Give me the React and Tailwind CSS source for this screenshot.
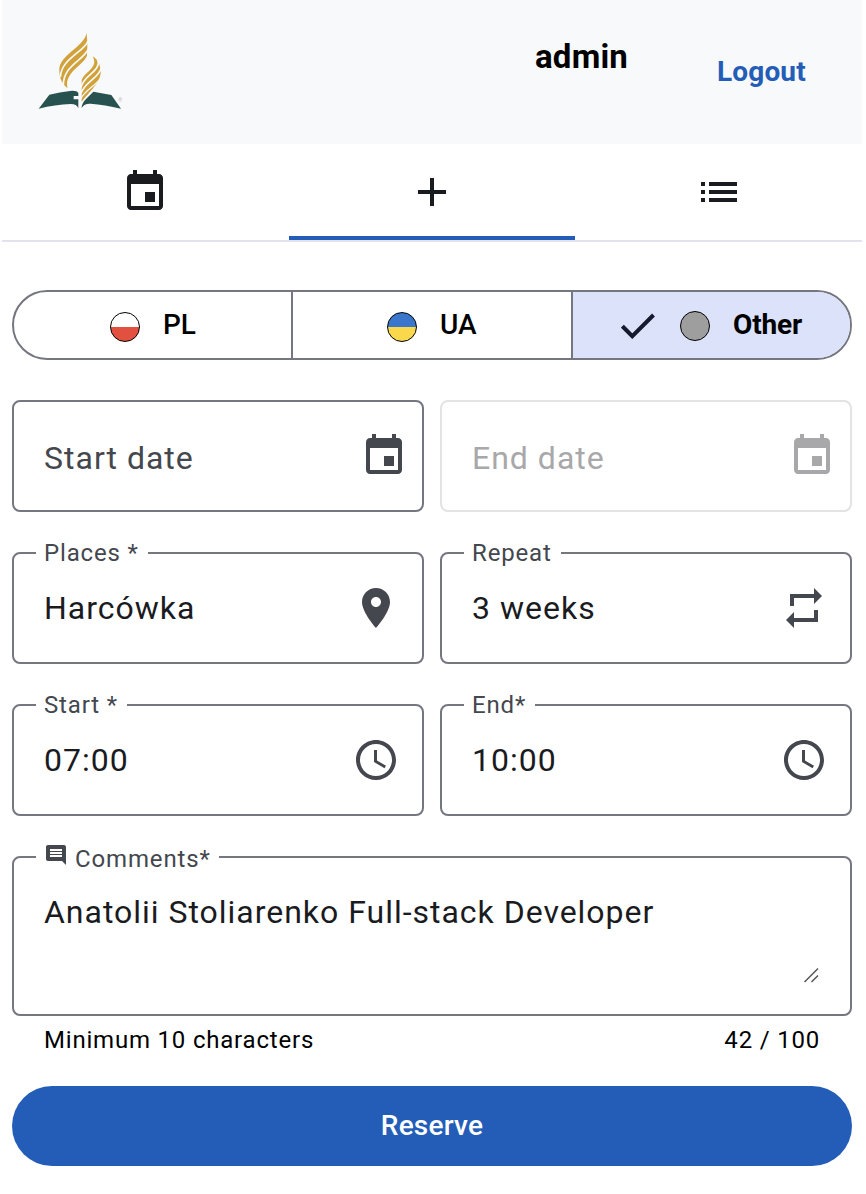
import React from "react";

const paths = {
  event:
    "M17 12h-5v5h5v-5zM16 1v2H8V1H6v2H5c-1.11 0-1.99.9-1.99 2L3 19c0 1.1.89 2 2 2h14c1.1 0 2-.9 2-2V5c0-1.1-.9-2-2-2h-1V1h-2zm3 18H5V8h14v11z",
  add: "M19 13h-6v6h-2v-6H5v-2h6V5h2v6h6v2z",
  list: "M3 13h2v-2H3v2zm0 4h2v-2H3v2zm0-8h2V7H3v2zm4 4h14v-2H7v2zm0 4h14v-2H7v2zM7 7v2h14V7H7z",
  place:
    "M12 2C8.13 2 5 5.13 5 9c0 5.25 7 13 7 13s7-7.75 7-13c0-3.87-3.13-7-7-7zm0 9.5c-1.38 0-2.5-1.12-2.5-2.5s1.12-2.5 2.5-2.5 2.5 1.12 2.5 2.5-1.12 2.5-2.5 2.5z",
  repeat: "M7 7h10v3l4-4-4-4v3H5v6h2V7zm10 10H7v-3l-4 4 4 4v-3h12v-6h-2v4z",
  clock:
    "M11.99 2C6.47 2 2 6.48 2 12s4.47 10 9.99 10C17.52 22 22 17.52 22 12S17.52 2 11.99 2zM12 20c-4.42 0-8-3.58-8-8s3.58-8 8-8 8 3.58 8 8-3.58 8-8 8zm.5-13H11v6l5.25 3.15.75-1.23-4.5-2.67z",
  comment:
    "M21.99 4c0-1.1-.89-2-1.99-2H4c-1.1 0-2 .9-2 2v12c0 1.1.9 2 2 2h14l4 4-.01-18zM18 14H6v-2h12v2zm0-3H6V9h12v2zm0-3H6V6h12v2z",
};

function Icon({ name, className = "size-12" }) {
  return (
    <svg viewBox="0 0 24 24" fill="currentColor" className={`shrink-0 ${className}`}>
      <path d={paths[name]} />
    </svg>
  );
}

function Logo() {
  return (
    <svg viewBox="108 90 270 240" className="mt-px h-20 w-[90px]">
      <g fill="#d2a23a">
        <path d="M260 96Q264 130 261 164C250 192 190 216 203 262C182 244 178 226 178 206C178 162 252 138 260 96Z" />
        <path d="M278 166C296 178 303 196 302 218C298 248 264 276 245 302V240C249 214 298 202 278 166Z" />
      </g>
      <g fill="none" stroke="#f8f9fb" strokeWidth="5">
        <path d="M264 120C254 152 184 172 181 228" />
        <path d="M264 146C250 178 190 194 190 252" />
        <path d="M294 176C304 212 248 222 242 262" />
        <path d="M304 200C298 232 250 244 242 281" />
        <path d="M304 228C290 254 256 264 242 294" strokeWidth="4" />
      </g>
      <g fill="#28524f">
        <path d="M148 281Q180 273 210 270Q230 268 235 276V285H221V295H235V322Q231 309 212 309Q166 311 116 323Z" />
        <path d="M280 272L334 282L363 323Q314 311 272 308Q252 307 245 321Q245 307 258 294Z" />
      </g>
      <text x="355" y="302" fontSize="15" fill="#b9bcbc" fontFamily="Roboto, sans-serif">®</text>
    </svg>
  );
}

function Field({ label, value, icon, disabled }) {
  return (
    <div
      className={`relative flex h-28 items-center justify-between rounded-lg border-2 pl-[30px] ${
        disabled
          ? "border-[#e3e3e3] pr-[14px] text-[#a8a8aa]"
          : value
            ? "border-[#74777f] pr-[22px] text-[#44474e]"
            : "border-[#74777f] pr-[14px] text-[#44474e]"
      }`}
    >
      {value ? (
        <>
          <span className="absolute -top-[15px] left-[22px] bg-white pl-2 pr-[9px] text-2xl leading-7 tracking-[0.85px]">{label}</span>
          <span className="text-[32px] leading-12 tracking-[1px] text-[#1a1b1f]">{value}</span>
          <Icon name={icon} />
        </>
      ) : (
        <>
          <span className="pt-1 text-[32px] leading-12 tracking-[1px]">{label}</span>
          <Icon name={icon} />
        </>
      )}
    </div>
  );
}

export default function App() {
  return (
    <div className="h-[1194px] w-[866px] overflow-hidden bg-white pl-0.5 pr-1 font-['Roboto',sans-serif] text-black">
      <header className="flex h-36 items-start bg-[#f8f9fb] pl-[34px] pt-[30px]">
        <Logo />
        <span className="ml-[409px] mt-[7px] w-[94px] whitespace-nowrap text-[33px] font-bold leading-10 tracking-[0.2px]">admin</span>
        <button className="ml-[88px] mt-6 whitespace-nowrap text-[28px] font-bold leading-9 tracking-[0.15px] text-[#245db7]">Logout</button>
      </header>

      <nav className="grid h-[98px] grid-cols-3 border-b-2 border-[#e1e2ec] text-[#1a1b1f]">
        <div className="flex items-center justify-center"><Icon name="event" /></div>
        <div className="flex items-center justify-center border-b-4 border-[#245db7] pt-1"><Icon name="add" /></div>
        <div className="flex items-center justify-center"><Icon name="list" /></div>
      </nav>

      <main className="px-2.5 pt-12">
        <div className="flex h-[70px] overflow-hidden rounded-full border-2 border-[#74777f] text-[28px] font-medium leading-10">
          <div className="flex w-[277px] items-center pl-24">
            <span className="mt-1 size-[30px] rounded-full border border-black bg-linear-to-b from-white from-50% to-[#e2513f] to-50%" />
            <span className="ml-[23px]">PL</span>
          </div>
          <div className="flex w-[280px] items-center border-l-2 border-[#74777f] pl-[94px]">
            <span className="mt-1 size-[30px] rounded-full border border-black bg-linear-to-b from-[#3976cc] from-50% to-[#fad84b] to-50%" />
            <span className="ml-[23px]">UA</span>
          </div>
          <div className="flex flex-1 items-center border-l-2 border-[#74777f] bg-[#dce2f9] pl-12">
            <svg viewBox="0 0 34 26" className="mt-0.5 h-[26px] w-[34px]">
              <path d="M1.4 13.2L11.3 23.2L32.5 2" fill="none" stroke="#151b2c" strokeWidth="4" />
            </svg>
            <span className="ml-[25px] mt-0.5 size-[30px] rounded-full border border-black bg-[#9e9e9e]" />
            <span className="ml-[23px] font-bold tracking-[-0.15px]">Other</span>
          </div>
        </div>

        <div className="mt-10 grid grid-cols-2 gap-x-4 gap-y-10">
          <Field label="Start date" icon="event" />
          <Field label="End date" icon="event" disabled />
          <Field label="Places *" value="Harcówka" icon="place" />
          <Field label="Repeat" value="3 weeks" icon="repeat" />
          <Field label="Start *" value="07:00" icon="clock" />
          <Field label="End*" value="10:00" icon="clock" />
        </div>

        <div className="relative mt-10 h-40 rounded-lg border-2 border-[#74777f] pl-[30px] pt-[30px]">
          <span className="absolute -top-[15px] left-[22px] flex bg-white px-2 text-2xl leading-8 tracking-[0.85px] text-[#44474e]">
            <Icon name="comment" className="mr-[7px] size-6" />
            Comments*
          </span>
          <p className="text-[32px] leading-12 tracking-[0.98px] text-[#1a1b1f]">Anatolii Stoliarenko Full-stack Developer</p>
          <svg viewBox="0 0 16 16" className="absolute bottom-[31px] right-[31px] size-4">
            <path d="M1.5 15L15 1.5M8.5 15L15 8.5" fill="none" stroke="#555" strokeWidth="1.5" />
          </svg>
        </div>
        <div className="flex justify-between px-8 pt-2 text-2xl leading-8 tracking-[0.8px]">
          <span>Minimum 10 characters</span>
          <span>42 / 100</span>
        </div>

        <button className="mt-[30px] h-20 w-full rounded-full bg-[#245db7] text-[28px] font-medium tracking-[0.2px] text-white">
          Reserve
        </button>
      </main>
    </div>
  );
}
